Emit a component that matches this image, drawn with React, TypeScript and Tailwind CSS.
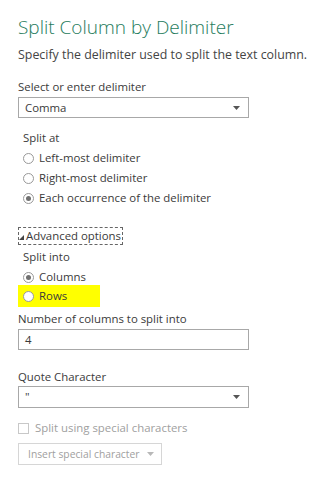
import type { ReactNode } from "react";

function Radio({ checked, children }: { checked?: boolean; children: ReactNode }) {
  return (
    <div className="flex h-5 items-center gap-[5px]">
      <span className="flex h-[11px] w-[11px] items-center justify-center rounded-full border border-[#999] bg-white">
        {checked && <span className="h-[5px] w-[5px] rounded-full bg-[#707070]" />}
      </span>
      <span>{children}</span>
    </div>
  );
}

function Caret({ light }: { light?: boolean }) {
  return (
    <svg width="7" height="4" viewBox="0 0 7 4" aria-hidden>
      <path d="M0 0h7L3.5 4z" fill={light ? "#b8b8b8" : "#555"} />
    </svg>
  );
}

export default function App() {
  return (
    <div className="h-[480px] w-[335px] bg-white pl-[18px] pt-[13px] font-['Open_Sans',sans-serif] text-[11.4px] leading-5 text-[#3a3a3a]">
      <h1 className="h-7 text-[19px] font-light leading-7 text-[#1e7b5c]">Split Column by Delimiter</h1>
      <p className="mt-[4px] h-5 text-[12.4px] text-[#444]">Specify the delimiter used to split the text column.</p>

      <div className="mt-[12px] h-5">Select or enter delimiter</div>
      <div className="flex h-[21px] w-[231px] items-center justify-between border border-[#a8a8a8] pl-[6px] pr-[8px]">
        <span>Comma</span>
        <Caret />
      </div>

      <div className="mt-[10px] pl-[5px]">
        <div className="h-5">Split at</div>
        <Radio>Left-most delimiter</Radio>
        <Radio>Right-most delimiter</Radio>
        <Radio checked>Each occurrence of the delimiter</Radio>
      </div>

      <div className="mt-[19px] flex h-[18px] w-[105px] items-center gap-[2px] whitespace-nowrap border border-dashed border-[#666]">
        <svg width="5" height="5" viewBox="0 0 5 5" aria-hidden className="mt-[3px]">
          <path d="M5 0v5H0z" fill="#444" />
        </svg>
        <span>Advanced options</span>
      </div>

      <div className="mt-[2px] pl-[5px]">
        <div className="h-5">Split into</div>
        <Radio checked>Columns</Radio>
      </div>
      <div className="-mt-[2px] flex h-[22px] w-[82px] items-center bg-[#ffff00] pl-[5px]">
        <Radio>Rows</Radio>
      </div>

      <div className="mt-[2px] h-5">Number of columns to split into</div>
      <div className="flex h-[21px] w-[231px] items-center border border-[#a8a8a8] pl-[6px]">4</div>

      <div className="mt-[17px] h-5">Quote Character</div>
      <div className="-mt-[1px] flex h-[22px] w-[231px] items-center justify-between border border-[#a8a8a8] pl-[6px] pr-[8px]">
        <span>"</span>
        <Caret />
      </div>

      <div className="mt-[10px] flex h-5 items-center gap-[6px] text-[#a0a0a0]">
        <span className="h-[11px] w-[11px] border border-[#c8c8c8]" />
        <span>Split using special characters</span>
      </div>
      <div className="mt-[5px] inline-flex h-[22px] items-center gap-[8px] whitespace-nowrap border border-[#d6d6d6] pl-[9px] pr-[7px] text-[10.3px] text-[#a0a0a0]">
        <span>Insert special character</span>
        <Caret light />
      </div>
    </div>
  );
}
